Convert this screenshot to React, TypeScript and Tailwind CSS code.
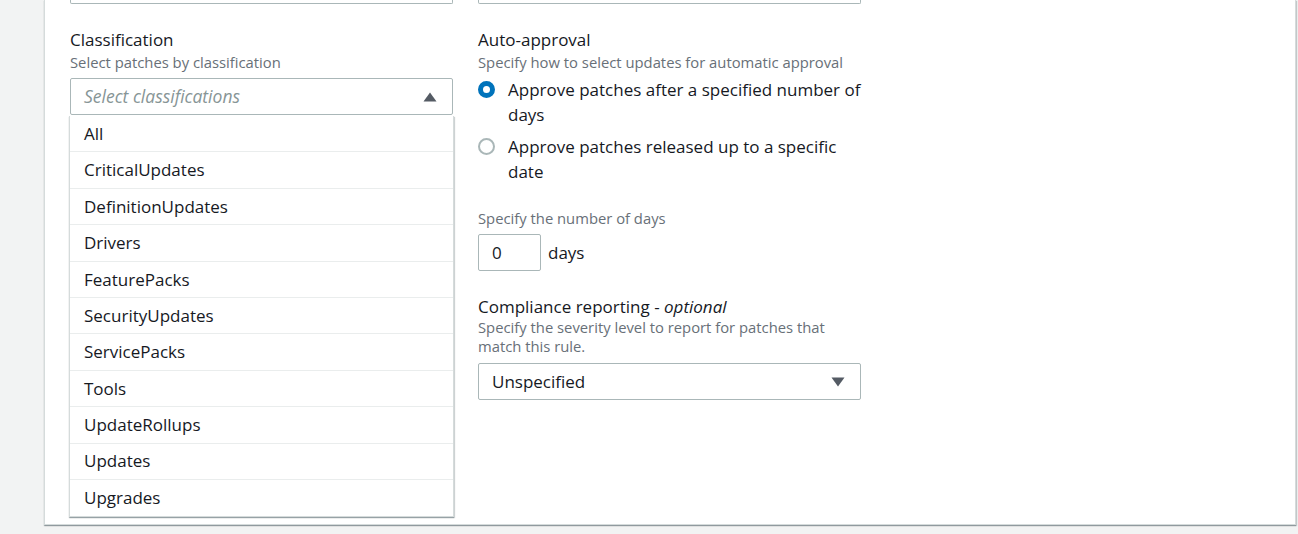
const classifications = [
  "All",
  "CriticalUpdates",
  "DefinitionUpdates",
  "Drivers",
  "FeaturePacks",
  "SecurityUpdates",
  "ServicePacks",
  "Tools",
  "UpdateRollups",
  "Updates",
  "Upgrades",
];

function Caret({ up }: { up?: boolean }) {
  return (
    <svg width="14" height="10" viewBox="0 0 14 10" className="shrink-0">
      {up ? (
        <path d="M7 0.5 L13.5 9.5 L0.5 9.5 Z" fill="#545b64" />
      ) : (
        <path d="M0.5 0.5 L13.5 0.5 L7 9.5 Z" fill="#545b64" />
      )}
    </svg>
  );
}

function Radio({ checked }: { checked?: boolean }) {
  return checked ? (
    <span className="mt-[4px] box-border block h-[17px] w-[17px] shrink-0 rounded-full border-[5px] border-[#0073bb] bg-white" />
  ) : (
    <span className="mt-[4px] box-border block h-[17px] w-[17px] shrink-0 rounded-full border-2 border-[#aab7b8] bg-white" />
  );
}

export default function App() {
  return (
    <div
      className="h-[534px] w-[1298px] overflow-hidden bg-[#f2f3f3] text-[#16191f]"
      style={{ fontFamily: '"Open Sans", "Noto Sans", Arial, sans-serif' }}
    >
      <div className="relative ml-[44px] h-[525px] w-[1252px] border-x border-b border-[#d5dbdb] bg-white shadow-[0_1px_1px_0_rgba(0,28,36,0.3),1px_1px_1px_0_rgba(0,28,36,0.15)]">
        <div className="grid grid-cols-[383px_383px] gap-x-[25px] pl-[25px]">
          {/* left column */}
          <div>
            <div className="h-[4px] rounded-b-[2px] border-x border-b border-[#aab7b8]" />
            <div className="mt-[25px] text-[17px] leading-[22px]">Classification</div>
            <div className="text-[14.8px] leading-[22px] text-[#687078]">Select patches by classification</div>
            <div className="mt-[5px] flex h-[37px] items-center justify-between rounded-[2px] border border-[#aab7b8] pl-[13px] pr-[15px]">
              <span className="text-[17.5px] italic text-[#879596]">Select classifications</span>
              <Caret up />
            </div>
            <div className="absolute left-[24px] top-[116px] w-[385px] border border-t-0 border-[#d5dbdb] bg-white shadow-[0_1px_1px_0_rgba(0,28,36,0.3),1px_1px_1px_0_rgba(0,28,36,0.15)]">
              {classifications.map((c, i) => (
                <div
                  key={c}
                  className={
                    "flex h-[36.4px] items-center pl-[14px] text-[17px] " +
                    (i < classifications.length - 1 ? "border-b border-[#eaeded]" : "")
                  }
                >
                  {c}
                </div>
              ))}
            </div>
          </div>

          {/* right column */}
          <div>
            <div className="h-[4px] rounded-b-[2px] border-x border-b border-[#aab7b8]" />
            <div className="mt-[25px] text-[17px] leading-[22px]">Auto-approval</div>
            <div className="text-[14.8px] leading-[22px] text-[#687078]">Specify how to select updates for automatic approval</div>
            <div className="mt-[4px] flex flex-col gap-[7px]">
              <label className="flex gap-[13px] text-[17px] leading-[25px]">
                <Radio checked />
                <span>Approve patches after a specified number of days</span>
              </label>
              <label className="flex gap-[13px] text-[17px] leading-[25px]">
                <Radio />
                <span>Approve patches released up to a specific date</span>
              </label>
            </div>

            <div className="mt-[23px] text-[14.8px] leading-[22px] text-[#687078]">Specify the number of days</div>
            <div className="mt-[5px] flex items-center gap-[7px]">
              <div className="flex h-[37px] w-[63px] items-center rounded-[2px] border border-[#aab7b8] pl-[13px] text-[17px]">0</div>
              <span className="text-[17px]">days</span>
            </div>

            <div className="mt-[25px] text-[17px] leading-[22px]">
              Compliance reporting - <i>optional</i>
            </div>
            <div className="text-[14.8px] leading-[19px] text-[#687078]">
              Specify the severity level to report for patches that match this rule.
            </div>
            <div className="mt-[7px] flex h-[37px] items-center justify-between rounded-[2px] border border-[#aab7b8] pl-[13px] pr-[15px]">
              <span className="text-[17px]">Unspecified</span>
              <Caret />
            </div>
          </div>
        </div>
      </div>
    </div>
  );
}
